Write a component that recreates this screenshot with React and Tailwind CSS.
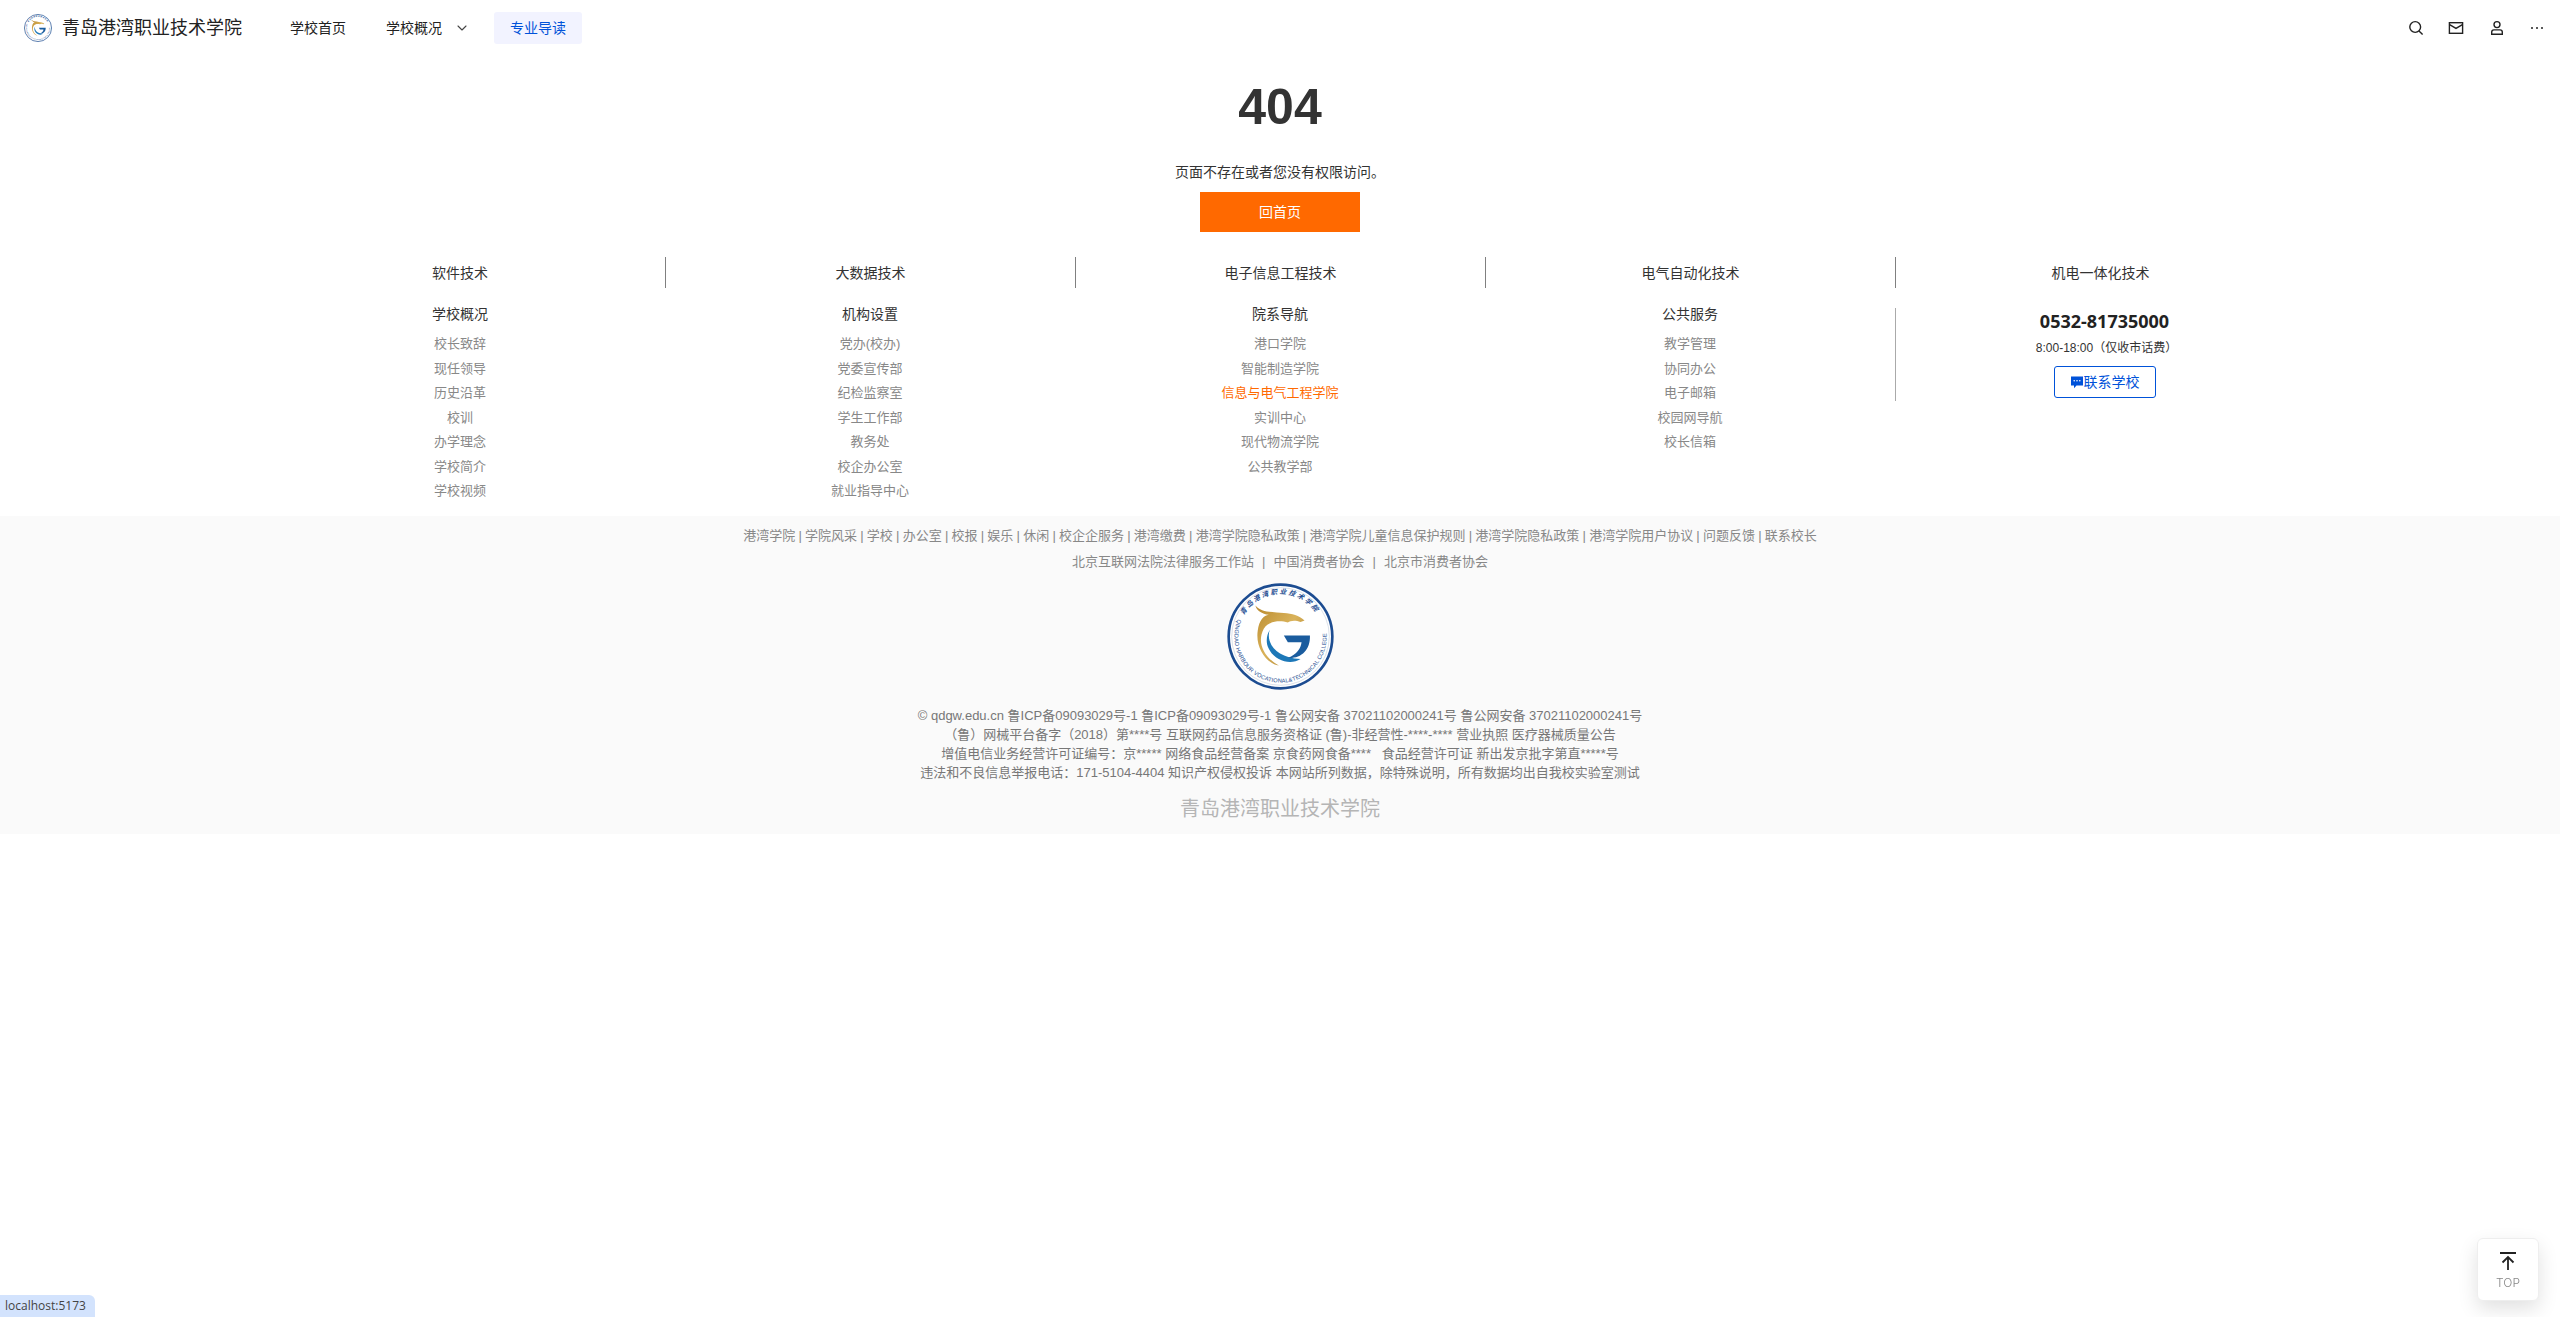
import { ChevronDown } from "lucide-react";

const majors = ["软件技术", "大数据技术", "电子信息工程技术", "电气自动化技术", "机电一体化技术"];

const columns = [
    { title: "学校概况", items: ["校长致辞", "现任领导", "历史沿革", "校训", "办学理念", "学校简介", "学校视频"] },
    { title: "机构设置", items: ["党办(校办)", "党委宣传部", "纪检监察室", "学生工作部", "教务处", "校企办公室", "就业指导中心"] },
    { title: "院系导航", items: ["港口学院", "智能制造学院", "信息与电气工程学院", "实训中心", "现代物流学院", "公共教学部"] },
    { title: "公共服务", items: ["教学管理", "协同办公", "电子邮箱", "校园网导航", "校长信箱"] },
];

const footerLinks = ["港湾学院", "学院风采", "学校", "办公室", "校报", "娱乐", "休闲", "校企企服务", "港湾缴费", "港湾学院隐私政策", "港湾学院儿童信息保护规则", "港湾学院隐私政策", "港湾学院用户协议", "问题反馈", "联系校长"];

function Logo({ className, id }) {
    return (
        <svg className={className} viewBox="80 38 320 320">
            <defs>
                <linearGradient id={`gold-${id}`} x1="0" y1="0" x2="1" y2="1">
                    <stop offset="0" stopColor="#b98a2e" />
                    <stop offset="0.5" stopColor="#d9b25a" />
                    <stop offset="1" stopColor="#a87c2a" />
                </linearGradient>
                <path id={`top-${id}`} d="M130 134.5 A127 127 0 0 1 350 134.5" />
                <path id={`bottom-${id}`} d="M112.2 146 A138 138 0 1 0 367.8 146" />
            </defs>
            <circle cx="240" cy="198" r="155" fill="#fff" stroke="#1c4c91" strokeWidth="8" />
            <circle cx="240" cy="198" r="146" fill="none" stroke="#b8c4d4" strokeWidth="1.5" />
            <text fontSize="20" fontWeight="700" fontStyle="italic" fill="#1c4c91" fontFamily="'Noto Sans CJK SC', sans-serif" letterSpacing="6">
                <textPath href={`#top-${id}`}>青岛港湾职业技术学院</textPath>
            </text>
            <text fontSize="17" fill="#1c4c91" fontFamily="'Liberation Sans', sans-serif" letterSpacing="0.5">
                <textPath href={`#bottom-${id}`}>QINGDAO HARBOUR VOCATIONAL&amp;TECHNICAL COLLEGE</textPath>
            </text>
            <path fill={`url(#gold-${id})`} d="M165 105 C180 125 215 125 250 128 C275 130 295 135 312 150 L300 155 C285 148 270 150 262 156 C240 150 205 150 190 175 C168 215 190 260 235 285 C190 275 165 225 172 180 C176 150 190 135 205 133 C185 130 168 120 165 105Z" />
            <path fill="#1d78b8" d="M208 178 C195 215 225 262 300 265 C270 285 222 270 205 235 C195 215 198 195 208 178Z" />
            <path fill="#1a5c9e" d="M250 195 L328 195 C330 240 300 265 262 262 C290 250 300 235 303 215 L262 215Z" />
        </svg>
    );
}

function HeaderIcons() {
    return (
        <div className="flex items-center text-[#222]">
            <svg className="w-4 h-4 mr-[24px]" viewBox="0 0 16 16" fill="none" stroke="currentColor" strokeWidth="1.4">
                <circle cx="7.2" cy="7" r="5.4" />
                <path d="M11 11l3.6 3.6" />
            </svg>
            <svg className="w-4 h-4 mr-[25px]" viewBox="0 0 16 16" fill="none" stroke="currentColor" strokeWidth="1.4">
                <rect x="1.4" y="2.7" width="13.2" height="10.6" />
                <path d="M1.6 4.6 8 8.4l6.4-3.8" />
            </svg>
            <svg className="w-4 h-4 mr-[24px]" viewBox="0 0 16 16" fill="none" stroke="currentColor" strokeWidth="1.4">
                <circle cx="8" cy="4.6" r="3" />
                <path d="M2.7 14.3v-2.2c0-1.3 1-2.2 2.2-2.2h6.2c1.2 0 2.2.9 2.2 2.2v2.2z" />
            </svg>
            <svg className="w-4 h-4" viewBox="0 0 16 16" fill="currentColor">
                <circle cx="3" cy="8" r="1" />
                <circle cx="8" cy="8" r="1" />
                <circle cx="13" cy="8" r="1" />
            </svg>
        </div>
    );
}

export default function App() {
    return (
        <div className="relative min-h-screen bg-white font-['Liberation_Sans','Noto_Sans_CJK_SC',sans-serif] text-[#333]">
            <header className="flex h-14 items-center justify-between pl-6 pr-[15px]">
                <div className="flex items-center">
                    <Logo id="head" className="w-7 h-7" />
                    <span className="ml-[10px] text-[18px] leading-7 text-[#222]">青岛港湾职业技术学院</span>
                    <nav className="ml-8 flex items-center gap-2 text-sm text-[#222]">
                        <a className="flex h-8 items-center px-4">学校首页</a>
                        <a className="flex h-8 items-center px-4">
                            学校概况
                            <ChevronDown className="w-4 h-4 ml-3 text-[#444]" strokeWidth={1.6} />
                        </a>
                        <a className="flex h-8 items-center rounded-[3px] bg-[#f2f3ff] px-4 text-[#0052d9]">专业导读</a>
                    </nav>
                </div>
                <HeaderIcons />
            </header>

            <main className="flex flex-col items-center">
                <h1 className="mt-6 text-[50px] leading-[54px] font-bold text-[#333]">404</h1>
                <p className="mt-7 text-sm leading-5 text-[#333]">页面不存在或者您没有权限访问。</p>
                <button className="mt-2.5 h-10 w-40 bg-[#ff6900] text-sm text-white">回首页</button>

                <div className="mt-[25px] grid w-[2050px] grid-cols-5">
                    {majors.map((m, i) => (
                        <div key={m} className={`flex h-[31px] items-center justify-center text-sm ${i > 0 ? "border-l border-[#808080]" : ""}`}>{m}</div>
                    ))}
                </div>

                <div className="mt-[14px] grid w-[2050px] grid-cols-5">
                    {columns.map(col => (
                        <div key={col.title} className="flex flex-col items-center">
                            <h3 className="h-[30px] text-sm leading-6 font-normal text-[#333]">{col.title}</h3>
                            {col.items.map(item => (
                                <a key={item} className={`text-[13px] leading-[24.5px] ${item === "信息与电气工程学院" ? "text-[#ff6900]" : "text-[#888]"}`}>{item}</a>
                            ))}
                        </div>
                    ))}
                    <div className="mt-[6px] flex h-[93px] flex-col items-center border-l border-[#aaa] pl-2">
                        <div className="mt-[-1px] font-['Noto_Sans',sans-serif] text-[18px] leading-7 font-bold text-[#222]">0532-81735000</div>
                        <div className="mt-[3px] ml-1 text-xs leading-5 text-[#333]">8:00-18:00（仅收市话费）</div>
                        <button className="mt-2 flex h-8 w-[102px] items-center justify-center rounded-[3px] border border-[#0052d9] text-sm text-[#0052d9]">
                            <svg className="w-[14px] h-[14px]" viewBox="0 0 14 14" fill="currentColor">
                                <path d="M1 1.5h12v9H6.5L4 13.2V10.5H1z" />
                                <circle cx="4.2" cy="5.8" r=".8" fill="#fff" />
                                <circle cx="7" cy="5.8" r=".8" fill="#fff" />
                                <circle cx="9.8" cy="5.8" r=".8" fill="#fff" />
                            </svg>
                            联系学校
                        </button>
                    </div>
                </div>
            </main>

            <footer className="mt-3 flex flex-col items-center bg-[#fafafa] pt-2.5 pb-[11px] text-[13px] text-[#888]">
                <div className="leading-5 [word-spacing:-0.4px]">
                    {footerLinks.map((l, i) => (
                        <span key={i}>{i > 0 && " | "}{l}</span>
                    ))}
                </div>
                <div className="mt-1.5 leading-5">
                    北京互联网法院法律服务工作站<span className="mx-2">|</span>中国消费者协会<span className="mx-2">|</span>北京市消费者协会
                </div>
                <Logo id="foot" className="mt-[11px] w-[107px] h-[107px]" />
                <div className="mt-[16px] text-center text-[13px] leading-[19px] text-[#777]">
                    <p>© qdgw.edu.cn 鲁ICP备09093029号-1 鲁ICP备09093029号-1 鲁公网安备 37021102000241号 鲁公网安备 37021102000241号</p>
                    <p>（鲁）网械平台备字（2018）第****号 互联网药品信息服务资格证 (鲁)-非经营性-****-**** 营业执照 医疗器械质量公告</p>
                    <p>增值电信业务经营许可证编号：京***** 网络食品经营备案 京食药网食备**** &nbsp; 食品经营许可证 新出发京批字第直*****号</p>
                    <p>违法和不良信息举报电话：171-5104-4404 知识产权侵权投诉 本网站所列数据，除特殊说明，所有数据均出自我校实验室测试</p>
                </div>
                <div className="mt-[13px] text-[20px] leading-7 text-[#b5b5b5]">青岛港湾职业技术学院</div>
            </footer>

            <button className="fixed right-[21px] bottom-4 flex h-[63px] w-[62px] flex-col items-center rounded-md border border-[#eee] bg-white pt-[13px] shadow-[0_8px_20px_rgba(0,0,0,0.12)]">
                <svg className="w-4 h-[18px]" viewBox="0 0 16 18" fill="none" stroke="#222" strokeWidth="1.8">
                    <path d="M0 1h16M8 18V5M2.5 10.5 8 5l5.5 5.5" />
                </svg>
                <span className="mt-[5px] font-['Inter',sans-serif] text-xs leading-4 font-light text-[#888]">TOP</span>
            </button>

            <div className="fixed bottom-0 left-0 flex h-[22px] w-[95px] items-center rounded-tr-md bg-[#d3e3fd] pl-[5px] font-['Open_Sans',sans-serif] text-xs text-[#444]">localhost:5173</div>
        </div>
    );
}
